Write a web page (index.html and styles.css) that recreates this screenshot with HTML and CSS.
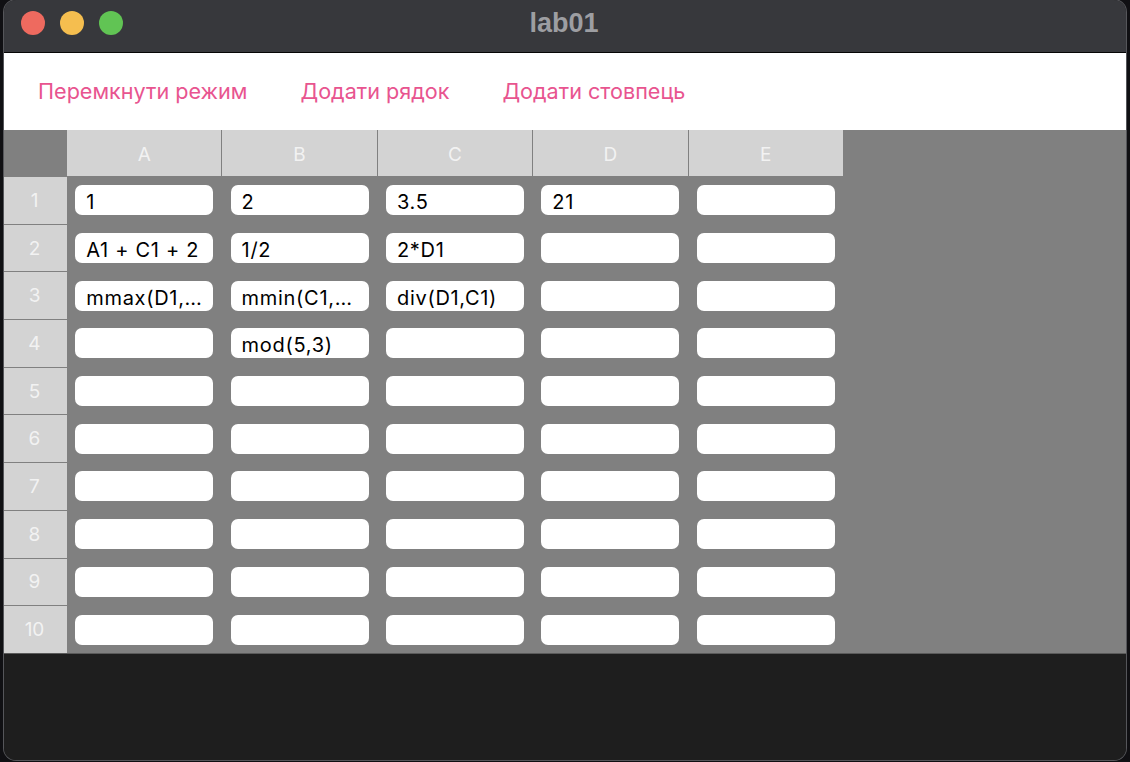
FILE: index.html
```html
<!DOCTYPE html>
<html lang="uk">
<head>
<meta charset="utf-8">
<title>lab01</title>
<link rel="stylesheet" href="styles.css">
</head>
<body>
<div class="window">
  <div class="titlebar">
    <div class="lights">
      <span class="light red"></span>
      <span class="light yellow"></span>
      <span class="light green"></span>
    </div>
    <div class="title">lab01</div>
  </div>
  <div class="toolbar">
    <button class="tbtn">Перемкнути режим</button>
    <button class="tbtn">Додати рядок</button>
    <button class="tbtn">Додати стовпець</button>
  </div>
  <div class="sheet">
    <div class="grid">
      <div class="corner"></div>
      <div class="colhead">A</div>
      <div class="colhead">B</div>
      <div class="colhead">C</div>
      <div class="colhead">D</div>
      <div class="colhead">E</div>

      <div class="rowhead">1</div>
      <div class="cell"><div class="field">1</div></div>
      <div class="cell"><div class="field">2</div></div>
      <div class="cell"><div class="field">3.5</div></div>
      <div class="cell"><div class="field">21</div></div>
      <div class="cell"><div class="field"></div></div>

      <div class="rowhead">2</div>
      <div class="cell"><div class="field">A1 + C1 + 2</div></div>
      <div class="cell"><div class="field">1/2</div></div>
      <div class="cell"><div class="field">2*D1</div></div>
      <div class="cell"><div class="field"></div></div>
      <div class="cell"><div class="field"></div></div>

      <div class="rowhead">3</div>
      <div class="cell"><div class="field">mmax(D1,…</div></div>
      <div class="cell"><div class="field">mmin(C1,…</div></div>
      <div class="cell"><div class="field">div(D1,C1)</div></div>
      <div class="cell"><div class="field"></div></div>
      <div class="cell"><div class="field"></div></div>

      <div class="rowhead">4</div>
      <div class="cell"><div class="field"></div></div>
      <div class="cell"><div class="field">mod(5,3)</div></div>
      <div class="cell"><div class="field"></div></div>
      <div class="cell"><div class="field"></div></div>
      <div class="cell"><div class="field"></div></div>

      <div class="rowhead">5</div>
      <div class="cell"><div class="field"></div></div>
      <div class="cell"><div class="field"></div></div>
      <div class="cell"><div class="field"></div></div>
      <div class="cell"><div class="field"></div></div>
      <div class="cell"><div class="field"></div></div>

      <div class="rowhead">6</div>
      <div class="cell"><div class="field"></div></div>
      <div class="cell"><div class="field"></div></div>
      <div class="cell"><div class="field"></div></div>
      <div class="cell"><div class="field"></div></div>
      <div class="cell"><div class="field"></div></div>

      <div class="rowhead">7</div>
      <div class="cell"><div class="field"></div></div>
      <div class="cell"><div class="field"></div></div>
      <div class="cell"><div class="field"></div></div>
      <div class="cell"><div class="field"></div></div>
      <div class="cell"><div class="field"></div></div>

      <div class="rowhead">8</div>
      <div class="cell"><div class="field"></div></div>
      <div class="cell"><div class="field"></div></div>
      <div class="cell"><div class="field"></div></div>
      <div class="cell"><div class="field"></div></div>
      <div class="cell"><div class="field"></div></div>

      <div class="rowhead">9</div>
      <div class="cell"><div class="field"></div></div>
      <div class="cell"><div class="field"></div></div>
      <div class="cell"><div class="field"></div></div>
      <div class="cell"><div class="field"></div></div>
      <div class="cell"><div class="field"></div></div>

      <div class="rowhead">10</div>
      <div class="cell"><div class="field"></div></div>
      <div class="cell"><div class="field"></div></div>
      <div class="cell"><div class="field"></div></div>
      <div class="cell"><div class="field"></div></div>
      <div class="cell"><div class="field"></div></div>
    </div>
  </div>
  <div class="footer"></div>
</div>
</body>
</html>
```

FILE: styles.css
```css
* { box-sizing: border-box; }

html, body {
  margin: 0;
  padding: 0;
  width: 1130px;
  height: 762px;
  overflow: hidden;
  background: #101013;
  font-family: Inter, "Noto Sans", "Liberation Sans", sans-serif;
}

.window {
  margin-left: 4px;
  width: 1122px;
  height: 760px;
  border-radius: 12px;
  overflow: hidden;
  display: flex;
  flex-direction: column;
  background: #1e1e1e;
  box-shadow: 0 0 0 1px #55565a;
}

.titlebar {
  height: 53px;
  flex: none;
  background: #37383c;
  border-bottom: 1px solid #050505;
  display: flex;
  align-items: center;
  justify-content: center;
  position: relative;
}

.lights {
  position: absolute;
  left: 17px;
  top: 11px;
  display: flex;
  gap: 15px;
}

.light {
  width: 24px;
  height: 24px;
  border-radius: 50%;
  display: block;
}
.red { background: #ee6a5f; }
.yellow { background: #f5be4f; }
.green { background: #61c454; }

.title {
  color: #9d9ea2;
  font-family: "Liberation Sans", Arial, sans-serif;
  font-weight: 700;
  font-size: 27px;
  margin-top: -6px;
  margin-right: 2px;
}

.toolbar {
  height: 77px;
  flex: none;
  background: #ffffff;
  display: flex;
  align-items: center;
  padding-left: 34px;
  gap: 53px;
}

.tbtn {
  border: 0;
  background: none;
  padding: 0;
  color: #e8548f;
  font-family: Inter, "Noto Sans", sans-serif;
  font-size: 21.6px;
  margin-top: -2px;
}

.sheet {
  height: 524px;
  flex: none;
  background: #808080;
  border-bottom: 1px solid #5a5a5a;
}

.grid {
  display: grid;
  grid-template-columns: 62px repeat(5, 154.4px);
  grid-template-rows: 46px repeat(10, 46.7px);
  column-gap: 1px;
  row-gap: 1px;
  width: max-content;
}

.corner { background: #808080; }

.colhead,
.rowhead {
  background: #d3d3d3;
  color: #f2f2f2;
  font-size: 19px;
  display: flex;
  align-items: center;
  justify-content: center;
}

.colhead { padding-top: 2px; }

.rowhead {
  margin-right: -1px;
  padding-right: 2px;
}

.cell {
  display: flex;
  align-items: center;
  justify-content: center;
}

.field {
  width: 138px;
  height: 30px;
  background: #ffffff;
  border-radius: 7px;
  color: #000000;
  font-size: 20px;
  letter-spacing: 0.7px;
  line-height: 30px;
  padding: 2px 10px 0 11px;
  white-space: nowrap;
  overflow: hidden;
}

.footer {
  flex: 1;
  background: #1e1e1e;
}
```
